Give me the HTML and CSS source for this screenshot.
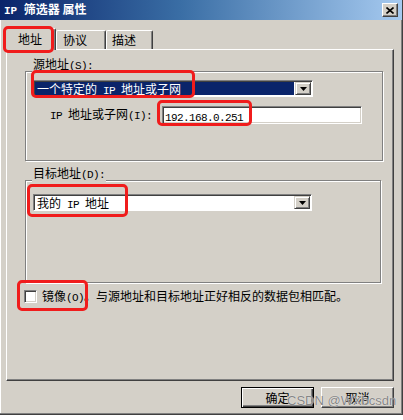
FILE: index.html
```html
<!DOCTYPE html>
<html lang="zh-CN">
<head>
<meta charset="utf-8">
<title>IP 筛选器 属性</title>
<link rel="stylesheet" href="styles.css">
</head>
<body>
<div class="window">
  <div class="titlebar">
    <span class="title"><span class="lat">IP </span>筛选器 属性</span>
    <span class="close"><svg width="8" height="7" viewBox="0 0 8 7"><path d="M0.5 0.5 L7.5 6.5 M7.5 0.5 L0.5 6.5" stroke="#000" stroke-width="1.6" fill="none"/></svg></span>
  </div>
  <div class="tabs">
    <div class="tab active">地址</div>
    <div class="tab t2">协议</div>
    <div class="tab t3">描述</div>
  </div>
  <div class="panel">
    <div class="group src">
      <div class="group-label">源地址<span class="lat">(S):</span></div>
      <div class="combo">
        <div class="combo-field selected">一个特定的<span class="lat"> IP </span>地址或子网</div>
        <div class="combo-btn"><svg width="7" height="4" viewBox="0 0 7 4"><path d="M0 0 H7 L3.5 4 Z" fill="#000"/></svg></div>
      </div>
      <div class="iprow">
        <div class="iplabel"><span class="lat">IP </span>地址或子网<span class="lat">(I):</span></div>
        <div class="textbox"><span class="lat">192.168.0.251</span></div>
      </div>
    </div>
    <div class="group dst">
      <div class="group-label">目标地址<span class="lat">(D):</span></div>
      <div class="combo dcombo">
        <div class="combo-field">我的<span class="lat"> IP </span>地址</div>
        <div class="combo-btn"><svg width="7" height="4" viewBox="0 0 7 4"><path d="M0 0 H7 L3.5 4 Z" fill="#000"/></svg></div>
      </div>
    </div>
    <div class="mirror">
      <span class="check"></span>
      <span class="mirror-text">镜像<span class="lat">(O)</span>。与源地址和目标地址正好相反的数据包相匹配。</span>
    </div>
  </div>
  <div class="buttons">
    <div class="btn default">确定</div>
    <div class="btn">取消</div>
  </div>

  <div class="mark m1"></div>
  <div class="mark m2"></div>
  <div class="mark m3"></div>
  <div class="mark m4"></div>
  <div class="mark m5"></div>
  <div class="watermark">CSDN @WXbcsdn</div>
</div>
</body>
</html>
```

FILE: styles.css
```css
* { box-sizing: border-box; }
html, body { margin: 0; background: #fff; }
body {
  font-family: "Noto Sans CJK SC", sans-serif;
  font-size: 12px;
  line-height: 14px;
  color: #000;
}
.lat {
  font-family: "Liberation Mono", "Noto Sans CJK SC", monospace;
  font-size: 11px;
  letter-spacing: -0.6px;
}
.window {
  position: relative;
  width: 403px;
  height: 415px;
  background: #d4d0c8;
  border-right: 1px solid #404040;
  border-bottom: 1px solid #404040;
  box-shadow: inset -1px -1px 0 #808080, inset 1px 0 0 #fff;
  display: flex;
  flex-direction: column;
}
.titlebar {
  height: 20px;
  flex: none;
  background: linear-gradient(to right, #0a246a 0%, #3a6ea5 45%, #a6caf0 100%);
  display: flex;
  align-items: center;
  justify-content: space-between;
  padding: 0 4px 0 4px;
  color: #fff;
  font-weight: bold;
}
.title .lat { font-weight: bold; letter-spacing: 0; }
.close {
  width: 16px;
  height: 14px;
  background: #d4d0c8;
  border: 1px solid;
  border-color: #fff #404040 #404040 #fff;
  box-shadow: inset -1px -1px 0 #808080;
  display: flex;
  align-items: center;
  justify-content: center;
}
.tabs {
  display: flex;
  align-items: flex-end;
  height: 21px;
  margin: 8px 0 0 4px;
  flex: none;
}
.tab {
  height: 19px;
  background: #d4d0c8;
  border: 1px solid;
  border-bottom: none;
  border-color: #fff #404040 transparent #fff;
  box-shadow: inset -1px 0 0 #808080;
  border-radius: 2px 2px 0 0;
  padding-top: 2px;
}
.tab.active {
  width: 52px;
  height: 22px;
  margin-bottom: -1px;
  padding-top: 3px;
  text-align: center;
  position: relative;
  z-index: 1;
}
.tab.t2 { width: 50px; padding-left: 6px; }
.tab.t3 { width: 47px; padding-left: 5px; }
.panel {
  margin-left: 6px;
  width: 388px;
  height: 332px;
  flex: none;
  border: 1px solid;
  border-color: #fff #404040 #404040 #fff;
  box-shadow: inset -1px -1px 0 #808080;
  display: flex;
  flex-direction: column;
  align-items: flex-start;
}
.group {
  margin-left: 18px;
  border: 1px solid #808080;
  box-shadow: inset 1px 1px 0 #fff, 1px 1px 0 #fff;
}
.group.src { margin-top: 21px; width: 358px; height: 90px; }
.group.dst { margin-top: 19px; width: 356px; height: 103px; }
.group-label {
  margin: -15px 0 0 6px;
  padding: 0 1px 2px 1px;
  width: fit-content;
  background: #d4d0c8;
}
.combo {
  margin: 5px 0 0 7px;
  width: 280px;
  height: 17px;
  display: flex;
  border: 1px solid;
  border-color: #808080 #fff #fff #808080;
  box-shadow: inset 1px 1px 0 #404040;
  padding: 1px;
  background: #fff;
}
.combo.dcombo { margin-top: 10px; width: 279px; }
.combo-field {
  flex: 1;
  padding-left: 2px;
  line-height: 13px;
  white-space: nowrap;
  margin-right: 1px;
}
.combo-field.selected { background: #0a246a; color: #fff; }
.combo-btn {
  width: 16px;
  height: 13px;
  background: #d4d0c8;
  border: 1px solid;
  border-color: #d4d0c8 #404040 #404040 #d4d0c8;
  box-shadow: inset 1px 1px 0 #fff, inset -1px -1px 0 #808080;
  display: flex;
  align-items: center;
  justify-content: center;
}
.iprow {
  display: flex;
  align-items: center;
  margin: 9px 0 0 24px;
}
.iplabel { width: 112px; white-space: nowrap; }
.textbox {
  width: 200px;
  height: 18px;
  background: #fff;
  border: 1px solid;
  border-color: #808080 #fff #fff #808080;
  box-shadow: inset 1px 1px 0 #404040, inset -1px -1px 0 #d4d0c8;
  padding: 1px 0 0 2px;
  line-height: 15px;
}
.mirror {
  display: flex;
  align-items: center;
  margin: 7px 0 0 17px;
  height: 13px;
}
.check {
  width: 13px;
  height: 13px;
  background: #fff;
  border: 1px solid;
  border-color: #808080 #fff #fff #808080;
  box-shadow: inset 1px 1px 0 #404040, inset -1px -1px 0 #d4d0c8;
}
.mirror-text { margin-left: 5px; white-space: nowrap; }
.buttons {
  display: flex;
  justify-content: flex-end;
  gap: 7px;
  margin-top: 6px;
  padding-right: 8px;
}
.btn {
  width: 73px;
  height: 21px;
  display: flex;
  align-items: center;
  justify-content: center;
  border: 1px solid;
  border-color: #fff #404040 #404040 #fff;
  box-shadow: inset -1px -1px 0 #808080;
}
.btn.default {
  border-color: #000;
  box-shadow: inset 1px 1px 0 #fff, inset -1px -1px 0 #404040, inset -2px -2px 0 #808080;
}
.mark {
  position: absolute;
  border: 3px solid #f01c1c;
  border-radius: 5px;
  z-index: 2;
}
.m1 { left: 3px; top: 26px; width: 51px; height: 27px; }
.m2 { left: 31px; top: 70px; width: 164px; height: 28px; }
.m3 { left: 157px; top: 100px; width: 95px; height: 26px; }
.m4 { left: 27px; top: 184px; width: 101px; height: 33px; }
.m5 { left: 17px; top: 280px; width: 71px; height: 31px; }
.watermark {
  position: absolute;
  left: 287px;
  top: 394px;
  font-family: "Liberation Sans", sans-serif;
  font-size: 13px;
  color: #858585;
  text-shadow: 0 0 1px #fff;
  z-index: 3;
}
```
